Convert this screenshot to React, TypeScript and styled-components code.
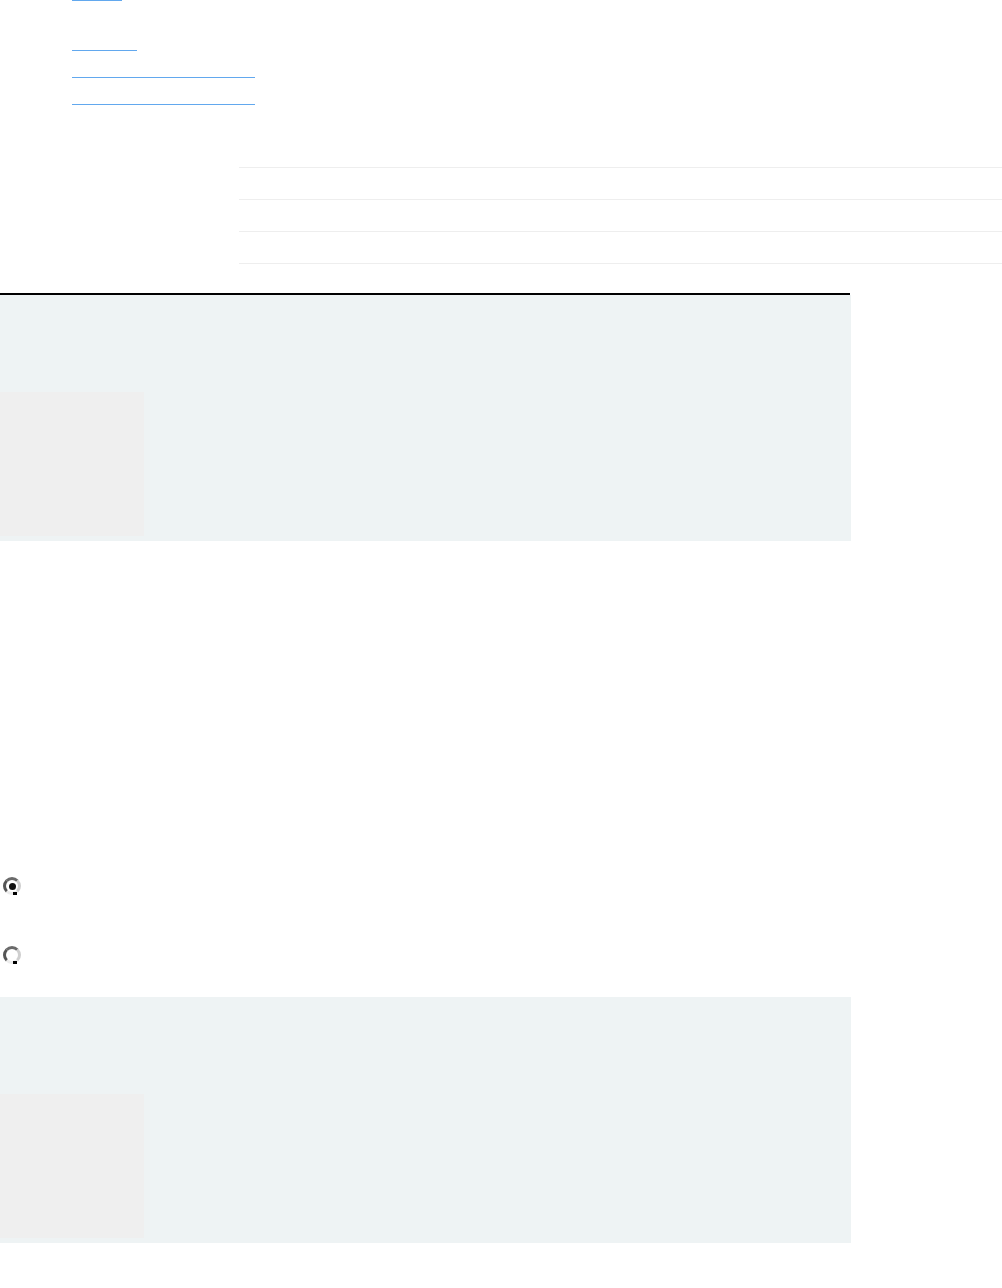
import React from "react";
import styled, { createGlobalStyle } from "styled-components";

const Global = createGlobalStyle`
  html, body { margin: 0; padding: 0; background: #ffffff; }
  body { font-family: "Liberation Sans", Arial, sans-serif; font-size: 14px; color: #333; }
`;

const Page = styled.div`
  display: flex;
  flex-direction: column;
  width: 1002px;
`;

const LinkList = styled.nav`
  display: flex;
  flex-direction: column;
  align-items: flex-start;
  padding-left: 72px;
`;

const LinkLine = styled.a<{ $w: number; $mt: number }>`
  display: block;
  width: ${(p) => p.$w}px;
  height: 0;
  margin-top: ${(p) => p.$mt}px;
  border-bottom: 1px solid #62a8ee;
  text-decoration: none;
`;

const Rows = styled.div`
  margin: 62px 0 0 239px;
  display: flex;
  flex-direction: column;
  border-bottom: 1px solid #eeeeee;
`;

const Row = styled.div`
  height: 31px;
  border-top: 1px solid #eeeeee;
`;

const Rule = styled.div`
  margin-top: 29px;
  width: 850px;
  height: 2px;
  background: #000000;
`;

const Panel = styled.section<{ $mt?: number }>`
  margin-top: ${(p) => p.$mt ?? 0}px;
  width: 851px;
  height: 246px;
  background: #eef3f4;
  display: flex;
  flex-direction: column;
`;

const Thumb = styled.div`
  margin-top: 97px;
  width: 144px;
  height: 144px;
  background: #efefef;
`;

const RadioGroup = styled.div`
  margin-top: 336px;
  display: flex;
  flex-direction: column;
  gap: 51px;
  padding-left: 3px;
`;

const RadioLabel = styled.label`
  display: flex;
  align-items: center;
  height: 18px;
`;

const RadioCircle = styled.span<{ $checked?: boolean }>`
  position: relative;
  box-sizing: border-box;
  width: 18px;
  height: 18px;
  border-radius: 50%;
  border: 3px solid;
  border-color: #6a6a6a #cfcfcf #ececec #555555;
  background: #ffffff;
  display: flex;
  align-items: center;
  justify-content: center;
  &::before {
    content: "";
    width: 7px;
    height: 7px;
    border-radius: 50%;
    background: ${(p) => (p.$checked ? "#111" : "transparent")};
  }
  &::after {
    content: "";
    position: absolute;
    right: 1px;
    bottom: -3px;
    width: 4px;
    height: 3px;
    background: #000;
  }
`;

export default function App() {
  return (
    <>
      <Global />
      <Page>
        <LinkList>
          <LinkLine href="#" aria-label="Link" $w={50} $mt={0} />
          <LinkLine href="#" aria-label="Link" $w={65} $mt={49} />
          <LinkLine href="#" aria-label="Link" $w={183} $mt={26} />
          <LinkLine href="#" aria-label="Link" $w={183} $mt={26} />
        </LinkList>
        <Rows>
          <Row />
          <Row />
          <Row />
        </Rows>
        <Rule />
        <Panel>
          <Thumb />
        </Panel>
        <RadioGroup>
          <RadioLabel aria-label="Option 1">
            <RadioCircle $checked />
          </RadioLabel>
          <RadioLabel aria-label="Option 2">
            <RadioCircle />
          </RadioLabel>
        </RadioGroup>
        <Panel $mt={33}>
          <Thumb />
        </Panel>
      </Page>
    </>
  );
}
